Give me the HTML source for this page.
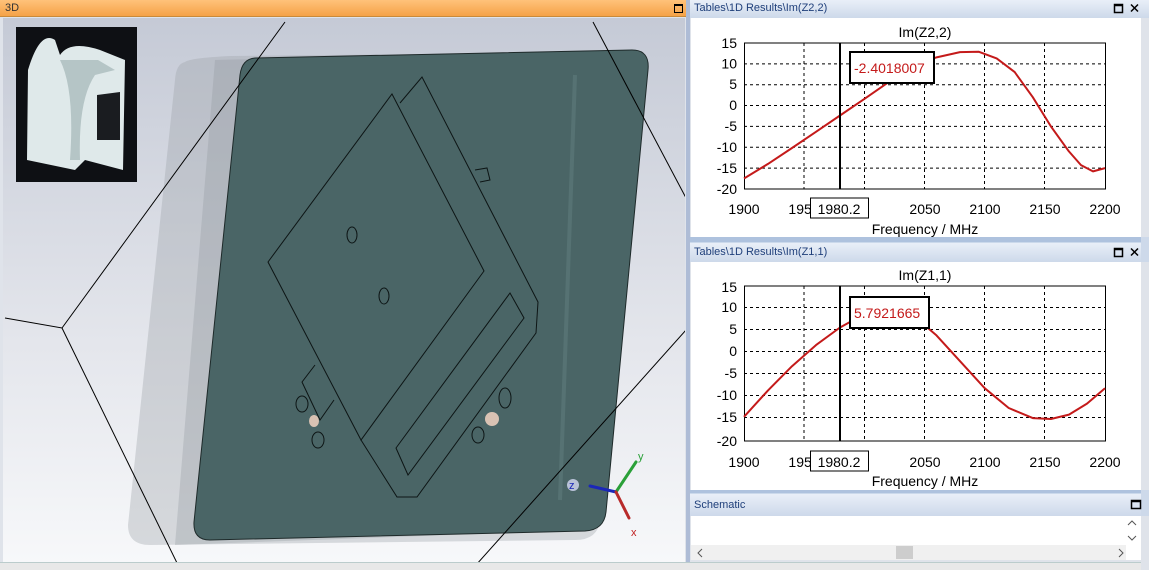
<!DOCTYPE html>
<html><head><meta charset="utf-8"><style>
*{margin:0;padding:0;box-sizing:border-box}
body{width:1149px;height:570px;overflow:hidden;background:#dfe3ea;font-family:"Liberation Sans",sans-serif;position:relative}
.t{position:absolute;font-size:11px;color:#1f3f7a}
</style></head><body>
<!-- 3D panel -->
<div style="position:absolute;left:0;top:0;width:686px;height:17px;background:linear-gradient(#ffc27a,#f5a247);border-bottom:1px solid #c98a3a"></div>
<div class="t" style="left:5px;top:2px;color:#333">3D</div>
<div style="position:absolute;left:674px;top:4px;width:9px;height:9px;border:1.5px solid #000;border-top-width:2.5px"></div>
<div style="position:absolute;left:3px;top:18px;width:682px;height:544px;background:linear-gradient(#c5cad6,#e4e6ec 60%,#f7f8fa)"></div>
<svg style="position:absolute;left:0;top:0" width="690" height="570">
<defs><clipPath id="c"><rect x="3" y="18" width="682" height="544"/></clipPath></defs>
<g clip-path="url(#c)">
<path d="M185,62 Q190,58 230,56 L620,52 Q640,52 640,70 L600,520 Q598,540 575,540 L150,545 Q128,545 128,525 L175,80 Q176,64 185,62Z" fill="#9aa0a6" opacity="0.35"/>
<path d="M215,60 L630,50 L590,530 L175,545 Z" fill="#8f969c" opacity="0.3"/>
<path d="M255,58 L632,50 Q650,50 648,70 L606,512 Q604,530 585,531 L210,540 Q193,540 194,522 L240,75 Q242,59 255,58Z" fill="#4a6566" stroke="#1e2a2a" stroke-width="1"/>
<path d="M575,75 L560,500" stroke="#5e7c7c" stroke-width="4" opacity="0.6"/>
<g fill="none" stroke="#0d1515" stroke-width="1">
<path d="M392,94 L484,271 L361,440 L268,262 Z"/>
<path d="M400,103 L422,77 L538,302 L536,333 L417,497 L397,497 L361,440"/>
<path d="M510,293 L524,318 L408,475 L396,448 Z"/>
<path d="M315,365 L302,382 L320,420 L334,400"/>
<path d="M475,170 L487,168 L490,180 L480,182"/>
<ellipse cx="352" cy="235" rx="5" ry="8"/><ellipse cx="384" cy="296" rx="5" ry="8"/>
<ellipse cx="302" cy="404" rx="6" ry="8"/><ellipse cx="318" cy="440" rx="6" ry="8"/>
<ellipse cx="505" cy="398" rx="6" ry="10"/><ellipse cx="478" cy="435" rx="6" ry="8"/>
</g>
<ellipse cx="492" cy="419" rx="7" ry="7" fill="#d9c2b3"/>
<ellipse cx="314" cy="421" rx="5" ry="6" fill="#d9c2b3"/>
<g stroke="#000" stroke-width="1" fill="none">
<path d="M285,22 L62,328 L5,318"/><path d="M62,328 L178,565"/>
<path d="M593,22 L686,198"/><path d="M686,330 L476,565"/>
</g>
</g>
<rect x="16" y="27" width="121" height="155" fill="#0e1014"/>
<path d="M28,70 Q40,30 55,40 L60,55 Q70,40 100,50 L125,60 L123,170 L85,160 L75,170 L27,160 Z" fill="#dfe9ea"/>
<path d="M60,60 Q75,90 70,160 L80,160 Q78,100 95,75 L115,70 L98,60 Z" fill="#b5c5c6"/>
<path d="M97,95 L120,92 L120,140 L97,140Z" fill="#1a1c20"/>
<g stroke-width="3" stroke-linecap="round">
<line x1="616" y1="492" x2="636" y2="462" stroke="#2aa038"/>
<line x1="616" y1="492" x2="590" y2="486" stroke="#1b27b8"/>
<line x1="616" y1="492" x2="629" y2="518" stroke="#b82a2a"/>
</g>
<circle cx="573" cy="485" r="6" fill="#b9c2d8"/>
<text x="569" y="489" font-size="11" fill="#1b27b8" font-family="Liberation Sans">z</text>
<text x="638" y="460" font-size="11" fill="#2aa038" font-family="Liberation Sans">y</text>
<text x="631" y="536" font-size="11" fill="#c02020" font-family="Liberation Sans">x</text>
</svg>
<div style="position:absolute;left:686px;top:0;width:4px;height:570px;background:#aebcd6"></div>
<div style="position:absolute;left:0;top:562px;width:1149px;height:8px;background:#e8e8e8;border-top:1px solid #bcc"></div>

<!-- right panels -->
<div style="position:absolute;left:690px;top:0;width:459px;height:18px;background:linear-gradient(#e9eff8,#cdd9ea)"></div>
<div class="t" style="left:694px;top:2px">Tables\1D Results\Im(Z2,2)</div>
<div style="position:absolute;left:690px;top:237px;width:459px;height:25px;background:linear-gradient(#aec2de 0,#aec2de 5px,#e9eff8 6px,#cdd9ea)"></div>
<div class="t" style="left:694px;top:246px">Tables\1D Results\Im(Z1,1)</div>
<div style="position:absolute;left:690px;top:490px;width:459px;height:26px;background:linear-gradient(#aec2de 0,#aec2de 3px,#e9eff8 4px,#cdd9ea)"></div>
<div class="t" style="left:694px;top:499px">Schematic</div>
<div style="position:absolute;left:691px;top:18px;width:450px;height:219px;background:#fff"></div>
<div style="position:absolute;left:691px;top:262px;width:450px;height:228px;background:#fff"></div>
<div style="position:absolute;left:691px;top:516px;width:450px;height:44px;background:#fff"></div>
<div style="position:absolute;left:691px;top:545px;width:435px;height:15px;background:#f0f0f0"></div>
<div style="position:absolute;left:896px;top:546px;width:17px;height:13px;background:#cdcdcd"></div>
<div style="position:absolute;left:1141px;top:18px;width:8px;height:552px;background:#dfe3ea"></div>
<div style="position:absolute;left:1141px;top:237px;width:8px;height:25px;background:#cdd9ea"></div>
<div style="position:absolute;left:1141px;top:490px;width:8px;height:26px;background:#cdd9ea"></div>
<svg style="position:absolute;left:686px;top:0" width="463" height="570" font-family="Liberation Sans">
<g fill="none" stroke="#000" stroke-width="1.5">
<rect x="428.5" y="4.5" width="8" height="8"/><rect x="428.5" y="248.5" width="8" height="8"/><rect x="445.5" y="500.5" width="9" height="8"/>
<path d="M445,4.5 l7,7 M452,4.5 l-7,7 M445,248.5 l7,7 M452,248.5 l-7,7"/>
<path d="M428.5,5.5 h8 M428.5,249.5 h8 M445.5,501.5 h9"/>
</g>
<g fill="none" stroke="#555" stroke-width="1"><path d="M442,525 l4,-4 4,4 M442,536 l4,4 4,-4 M16,549 l-4,4 4,4 M433,549 l4,4 -4,4"/></g>
<g stroke="#000" stroke-width="1" stroke-dasharray="3,3">
<path d="M58,63.9H419M58,84.7H419M58,105.5H419M58,126.4H419M58,147.2H419M58,168.1H419"/>
<path d="M118,43V189M178.5,43V189M238.5,43V189M298.5,43V189M358.5,43V189"/>
<path d="M58,307.5H419M58,329.5H419M58,351.5H419M58,373.5H419M58,395.5H419M58,417.5H419"/>
<path d="M118,286V441M178.5,286V441M238.5,286V441M298.5,286V441M358.5,286V441"/>
</g>
<g fill="none" stroke="#000" stroke-width="1">
<rect x="58.5" y="43" width="361" height="146"/>
<rect x="58.5" y="286" width="361" height="155"/>
</g>
<polyline points="58,178.5 82,163.9 106,148 130,131.8 154,115.5 178,99.2 202,82.6 226,68 250,57.5 274,52.1 292.6,51.7 310.7,58.4 328.7,72.1 346.8,97.2 364.9,126.4 382.9,151.4 395,165.1 407,171.4 419,168.1" fill="none" stroke="#c41a1a" stroke-width="2" stroke-linejoin="round"/>
<polyline points="58,416.8 82,390.4 106,366.2 130,345.1 154,327.5 178,314.3 196,309 214,310.8 232.5,320 250.5,335.4 274.6,361.8 298.7,388.2 322.7,408 346.8,418.1 364.9,419 383,414.6 401,403.6 419,388.2" fill="none" stroke="#c41a1a" stroke-width="2" stroke-linejoin="round"/>
<line x1="154" y1="43" x2="154" y2="189" stroke="#000" stroke-width="2"/>
<line x1="154" y1="286" x2="154" y2="441" stroke="#000" stroke-width="2"/>
<rect x="164" y="52" width="84" height="31" fill="#fff" stroke="#000" stroke-width="2"/>
<text x="168" y="73" font-size="14" fill="#c41a1a">-2.4018007</text>
<rect x="164" y="297" width="79" height="31" fill="#fff" stroke="#000" stroke-width="2"/>
<text x="168" y="318" font-size="14" fill="#c41a1a">5.7921665</text>
<g font-size="14" fill="#000" text-anchor="end">
<text x="51" y="48">15</text><text x="51" y="68.5">10</text><text x="51" y="89">5</text><text x="51" y="110">0</text><text x="51" y="131">-5</text><text x="51" y="152">-10</text><text x="51" y="173">-15</text><text x="51" y="194">-20</text>
<text x="51" y="292">15</text><text x="51" y="312">10</text><text x="51" y="334">5</text><text x="51" y="356">0</text><text x="51" y="378">-5</text><text x="51" y="400">-10</text><text x="51" y="422">-15</text><text x="51" y="446">-20</text>
</g>
<g font-size="14" fill="#000" text-anchor="middle">
<text x="239" y="37">Im(Z2,2)</text><text x="239" y="280">Im(Z1,1)</text>
<text x="58" y="214">1900</text><text x="118" y="214">1950</text><text x="239" y="214">2050</text><text x="299" y="214">2100</text><text x="359" y="214">2150</text><text x="419" y="214">2200</text>
<text x="58" y="467">1900</text><text x="118" y="467">1950</text><text x="239" y="467">2050</text><text x="299" y="467">2100</text><text x="359" y="467">2150</text><text x="419" y="467">2200</text>
<text x="239" y="234">Frequency / MHz</text><text x="239" y="486">Frequency / MHz</text>
</g>
<rect x="124.5" y="198" width="58" height="20" fill="#fff" stroke="#000"/>
<text x="153" y="214" font-size="14" text-anchor="middle">1980.2</text>
<rect x="124.5" y="451" width="58" height="20" fill="#fff" stroke="#000"/>
<text x="153" y="467" font-size="14" text-anchor="middle">1980.2</text>
</svg>
</body></html>
